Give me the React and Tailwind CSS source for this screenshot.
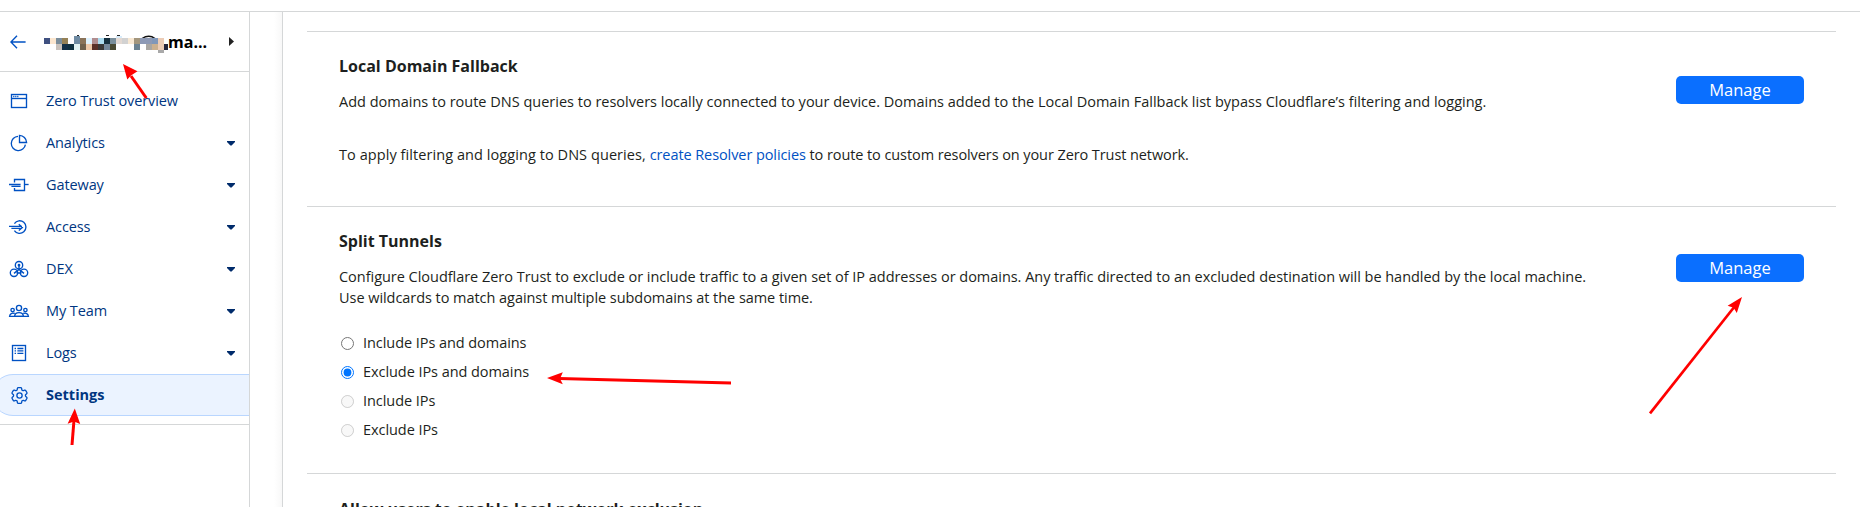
import { HiOutlineCog6Tooth } from "react-icons/hi2";

const iconProps = {
  width: 22,
  height: 20,
  viewBox: "0 0 22 20",
  fill: "none",
  stroke: "currentColor",
  strokeWidth: 1.35,
  className: "block",
};

const WindowIcon = () => (
  <svg {...iconProps}>
    <rect x="3.5" y="3.5" width="15" height="13" />
    <path d="M3.5 7.5h15" />
    <path d="M5.2 5.5h1.2M7.2 5.5h1.2M9.2 5.5h1.2" />
  </svg>
);

const PieIcon = () => (
  <svg {...iconProps}>
    <path d="M10 3.4A7.1 7.1 0 1 0 17.4 11.6" />
    <path d="M11.5 2.4V9.5H18.6A7.4 7.4 0 0 0 11.5 2.4Z" />
  </svg>
);

const GatewayIcon = () => (
  <svg {...iconProps}>
    <path d="M6.5 7.5V4.5H16.5V15.5H6.5V13" />
    <path d="M16.5 9.5H20.6" />
    <path d="M1 9.5H12.6M3.4 11.4H12.6" />
  </svg>
);

const AccessIcon = () => (
  <svg {...iconProps}>
    <path d="M6.4 6.6A6.3 6.3 0 1 1 6.4 13.6" />
    <path d="M1 9.4H14M3.4 11.3H13.4M10.8 7.2L14.4 10.4L10.8 13.5" />
  </svg>
);

const DexIcon = () => (
  <svg {...iconProps}>
    <circle cx="11" cy="6.2" r="3.7" />
    <circle cx="6" cy="13.8" r="3.7" />
    <circle cx="16" cy="13.8" r="3.7" />
    <path d="M11 5.4V10.4M11 10.4L6 14.4M11 10.4L16 14.4M8.6 14H13.4" />
    <circle cx="11" cy="6.2" r="0.7" />
  </svg>
);

const TeamIcon = () => (
  <svg {...iconProps}>
    <circle cx="11" cy="7" r="2.6" />
    <circle cx="4.6" cy="9" r="1.7" />
    <circle cx="17.4" cy="9" r="1.7" />
    <path d="M6.6 15.3C6.8 12.4 8.4 11.6 11 11.6S15.2 12.4 15.4 15.3Z" />
    <path d="M6.8 12.5C4 11.6 1.9 12.6 1.6 15.3H20.4C20.1 12.6 18 11.6 15.2 12.5" />
  </svg>
);

const LogsIcon = () => (
  <svg {...iconProps}>
    <rect x="4.5" y="2.5" width="13" height="15" />
    <path d="M6.6 5.5H8M9.4 5.5H15.4M6.6 7.9H8M9.4 7.9H15.4M6.6 10.3H8M9.4 10.3H15.4" />
  </svg>
);

const NAV = [
  { label: "Zero Trust overview", icon: <WindowIcon /> },
  { label: "Analytics", icon: <PieIcon />, menu: true },
  { label: "Gateway", icon: <GatewayIcon />, menu: true },
  { label: "Access", icon: <AccessIcon />, menu: true },
  { label: "DEX", icon: <DexIcon />, menu: true },
  { label: "My Team", icon: <TeamIcon />, menu: true },
  { label: "Logs", icon: <LogsIcon />, menu: true },
];

const MASK = [
  ["#3f5080", "#fbe6cf", "#7a8d9b", "#958156", "#fdfdff", "#6f8ba3", "#8a7359", "#dff2fe", "#b08d8f", "#addcf0", "#16303f", "#7a8f9c", "#e3d9d3", "#d2d2d2", "#f8e8d3", "#a3967d", "#8d99b5", "#8d99b5", "#8097b9", "#ecccb6"],
  [null, null, "#c9c1bb", "#123048", "#0f3040", "#e2f3f4", "#6f604c", "#edc9aa", "#5a3028", "#3a3838", "#74879b", "#4a4a34", null, null, null, "#6c8291", null, "#a9a6a2", "#cbb08f", "#ecccb6"],
];

function MaskedName() {
  return (
    <svg width="124" height="18" viewBox="0 0 124 18" shapeRendering="crispEdges" className="block">
      <path d="M98 3.5Q105 -1 111 3.5" fill="none" stroke="#111" strokeWidth="1.3" shapeRendering="auto" />
      <path d="M33 0h2v3h-2zM62 0h3v1h-3zM73 0h3v1h-3z" fill="#222" />
      <path d="M30 1h6v2h-6z" fill="#6f8ba3" />
      <path d="M72 1h6v2h-6z" fill="#d8ecfb" />
      {MASK.map((row, y) =>
        row.map((c, x) => c && <rect key={`${x}-${y}`} x={x * 6} y={3 + y * 6} width="6" height="6" fill={c} />)
      )}
      <path d="M120 9h5v6h-5z" fill="#25253c" />
      <path d="M114 15h6v3h-6z" fill="#a9a9a9" />
    </svg>
  );
}

function Sidebar() {
  return (
    <aside className="flex w-[250px] shrink-0 flex-col overflow-hidden border-r border-[#d5d7d8]">
      <div className="flex h-[60px] items-center border-b border-[#d5d7d8] pl-[10px] pr-[15px]">
        <svg width="16" height="14" viewBox="0 0 16 14" fill="none" stroke="#0051c3" strokeWidth="1.4" className="mt-px shrink-0">
          <path d="M15.6 7H1M7 0.8L0.9 7L7 13.2" />
        </svg>
        <div className="ml-[18px] flex items-center">
          <div className="mt-[5px]">
            <MaskedName />
          </div>
          <span className="text-base font-bold leading-6 text-black">ma...</span>
        </div>
        <svg width="5" height="9" viewBox="0 0 5 9" className="ml-auto">
          <path d="M0 0L5 4.5L0 9Z" fill="#222" />
        </svg>
      </div>
      <nav className="border-b border-[#d5d7d8] pb-2 pt-2 text-[14.5px] text-[#003681]">
        {NAV.map((n) => (
          <a key={n.label} className="flex h-[42px] items-center pl-2 pr-[14px]">
            <span className="w-[38px] text-[#0051c3]">{n.icon}</span>
            <span className="tracking-[-0.1px]">{n.label}</span>
            {n.menu && (
              <svg width="8" height="5" viewBox="0 0 8 5" className="ml-auto">
                <path d="M0 0H8V1L4.6 4.6H3.4L0 1Z" fill="#002b6b" />
              </svg>
            )}
          </a>
        ))}
        <a className="-ml-2 -mr-px flex h-[42px] items-center rounded-l-full border border-[#b9d6ff] bg-[#ebf3ff] pl-[15px] font-bold">
          <span className="w-[38px] pl-[0.5px] text-[#0051c3]">
            <HiOutlineCog6Tooth size={21} className="block" />
          </span>
          <span>Settings</span>
        </a>
      </nav>
    </aside>
  );
}

function Manage() {
  return (
    <button className="h-7 w-32 shrink-0 rounded-[5px] bg-[#0a6fff] text-[16.5px] leading-7 text-white">Manage</button>
  );
}

const OPTIONS = [
  { label: "Include IPs and domains" },
  { label: "Exclude IPs and domains", checked: true },
  { label: "Include IPs", disabled: true },
  { label: "Exclude IPs", disabled: true },
];

function Arrows() {
  return (
    <svg width="1860" height="507" viewBox="0 0 1860 507" className="pointer-events-none absolute left-0 top-0" fill="#f00" stroke="#f00">
      <g strokeWidth="3">
        <path d="M131 76L146.3 98" />
        <path d="M74 420L72 445" />
        <path d="M559 378.6L731 383" />
        <path d="M1735 306L1650 413.3" strokeWidth="2.7" />
      </g>
      <g stroke="none">
        <path d="M123 64L137.5 71.3L131 75.5L127.3 79.6Z" />
        <path d="M74.8 408.5L80.2 424L74 421.5L67.6 423.7Z" />
        <path d="M547 378L562.8 372.2L560 378.7L562.8 384.2Z" />
        <path d="M1742 297L1727.6 305.8L1733.6 307.8L1736.8 313Z" />
      </g>
    </svg>
  );
}

export default function App() {
  return (
    <div className="relative flex h-[507px] w-[1860px] flex-col overflow-hidden bg-white pt-[11px] font-['Open_Sans',sans-serif] text-[#1d1f20]">
      <div className="flex min-h-0 flex-1 border-t border-[#d5d7d8]">
        <Sidebar />
        <div className="w-8 shrink-0 bg-linear-to-r from-white from-75% to-[#f8f8f8]" />
        <main className="min-w-0 flex-1 border-l border-[#d5d7d8] pl-6 pr-6 pt-[19px]">
          <section className="flex h-[175px] justify-between border-t border-[#d5d7d8] px-8">
            <div className="whitespace-nowrap pt-[22px]">
              <h2 className="text-base font-bold leading-6">Local Domain Fallback</h2>
              <p className="mt-[13px] text-[14.5px] leading-[21px]">
                Add domains to route DNS queries to resolvers locally connected to your device. Domains added to the Local Domain Fallback list bypass Cloudflare’s filtering and logging.
              </p>
              <p className="mt-8 text-[14.5px] leading-[21px] tracking-[-0.085px]">
                <span className="tracking-[0.07px]">To apply filtering and logging to DNS queries, </span>
                <a className="text-[#0051c3]">create Resolver policies</a> to route to custom resolvers on your Zero Trust network.
              </p>
            </div>
            <div className="pt-[44px]">
              <Manage />
            </div>
          </section>
          <section className="flex h-[267px] justify-between border-t border-[#d5d7d8] px-8">
            <div className="whitespace-nowrap pt-[22px]">
              <h2 className="text-base font-bold leading-6">Split Tunnels</h2>
              <p className="mt-[13px] text-[14.5px] leading-[21px] tracking-[-0.03px]">
                Configure Cloudflare Zero Trust to exclude or include traffic to a given set of IP addresses or domains. Any traffic directed to an excluded destination will be handled by the local machine.
                <br />
                <span className="tracking-[-0.05px]">Use wildcards to match against multiple subdomains at the same time.</span>
              </p>
              <div className="mt-[21px] text-[14.5px]">
                {OPTIONS.map((o) => (
                  <label key={o.label} className="flex h-[29px] items-center pl-[2px]">
                    <input type="radio" name="mode" defaultChecked={o.checked} disabled={o.disabled} className="m-0 h-[13px] w-[13px]" />
                    <span className="ml-[9px] pb-[2px] leading-[21px] tracking-[-0.06px]">{o.label}</span>
                  </label>
                ))}
              </div>
            </div>
            <div className="pt-[47px]">
              <Manage />
            </div>
          </section>
          <section className="border-t border-[#d5d7d8] px-8 pt-[23px]">
            <h2 className="text-base font-bold leading-6">Allow users to enable local network exclusion</h2>
          </section>
        </main>
      </div>
      <Arrows />
    </div>
  );
}
